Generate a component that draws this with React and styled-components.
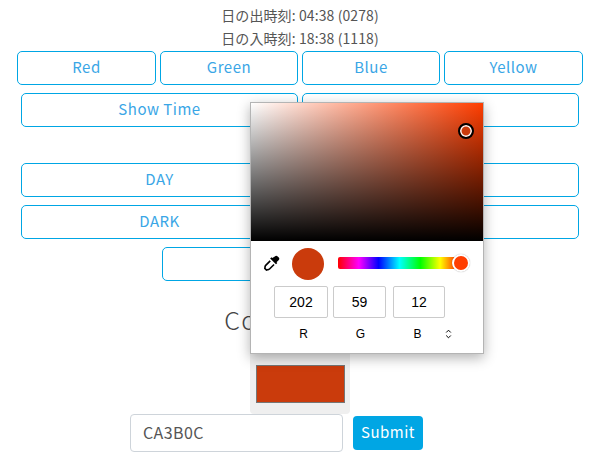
import React from 'react';
import styled, { createGlobalStyle } from 'styled-components';

const BLUE = '#00a6e4';
const PICKED = '#ca3b0c';
const HUE = '#ff3d00';

const GlobalStyle = createGlobalStyle`
  html, body {
    margin: 0;
    background: #fff;
    overflow: hidden;
  }
  body {
    font-family: "Noto Sans CJK JP", "Noto Sans", sans-serif;
  }
`;

const Page = styled.div`
  position: relative;
  width: 600px;
  height: 459px;
  padding-top: 5px;
  box-sizing: border-box;
  display: flex;
  flex-direction: column;
  align-items: center;
`;

const InfoLine = styled.div`
  height: 23px;
  line-height: 20px;
  font-size: 14px;
  letter-spacing: 0.1px;
  color: #555;
  white-space: nowrap;
`;

const ButtonRow = styled.div`
  display: flex;
  justify-content: center;
  gap: 4px;
  margin-top: ${props => props.$top ?? 8}px;
  padding-left: ${props => props.$nudge || 0}px;
`;

const OutlineButton = styled.button`
  width: ${props => props.$width}px;
  height: 34px;
  padding: 0 0 4px;
  box-sizing: border-box;
  background: #fff;
  border: 1px solid ${BLUE};
  border-radius: 5px;
  color: #3aa6e6;
  font-family: inherit;
  font-size: 15px;
  letter-spacing: 0.5px;
`;

const Title = styled.h2`
  margin: 22px 0 0;
  height: 32px;
  line-height: 32px;
  font-size: 25px;
  font-weight: 300;
  letter-spacing: 1.3px;
  color: #444;
  white-space: nowrap;
`;

const SwatchWell = styled.div`
  margin-top: 19px;
  width: 100px;
  height: 60px;
  padding: 11px 6px;
  box-sizing: border-box;
  background: #efefef;
  border-radius: 0 0 4px 4px;
`;

const Swatch = styled.div`
  width: 89px;
  height: 38px;
  box-sizing: border-box;
  border: 1px solid #767676;
  background: ${PICKED};
`;

const CodeForm = styled.div`
  display: flex;
  align-items: center;
  gap: 10px;
  margin-right: 47px;
`;

const CodeInput = styled.input`
  width: 213px;
  height: 38px;
  box-sizing: border-box;
  padding: 0 0 2px 12px;
  border: 1px solid #ced4da;
  border-radius: 4px;
  background: #fff;
  color: #555;
  font-family: inherit;
  font-size: 16px;
  letter-spacing: 0.4px;
`;

const SubmitButton = styled.button`
  width: 70px;
  height: 34px;
  padding: 0 0 3px;
  border: none;
  border-radius: 4px;
  background: ${BLUE};
  color: #fff;
  font-family: inherit;
  font-size: 15px;
  font-weight: 400;
  letter-spacing: 0.5px;
`;

/* native colour popup, lies over the page */
const Popup = styled.div`
  position: absolute;
  left: 250px;
  top: 102px;
  width: 234px;
  height: 252px;
  box-sizing: border-box;
  background: #fff;
  border: 1px solid #b4b4b4;
  box-shadow: 0 4px 12px rgba(0, 0, 0, 0.3);
  font-family: "Liberation Sans", Arial, sans-serif;
  color: #000;
`;

const SatVal = styled.div`
  position: relative;
  height: 138px;
  background:
    linear-gradient(to bottom, rgba(0, 0, 0, 0), #000),
    linear-gradient(to right, #fff, ${HUE});
`;

const Marker = styled.div`
  position: absolute;
  left: 207px;
  top: 20px;
  width: 16px;
  height: 16px;
  box-sizing: border-box;
  border-radius: 50%;
  border: 2.5px solid #000;
  background: ${PICKED};
  box-shadow: inset 0 0 0 1.5px #fff;
`;

const Controls = styled.div`
  display: flex;
  align-items: center;
  height: 44px;
  padding-left: 13px;
`;

const Picker = styled.svg`
  width: 16px;
  height: 16px;
  flex: none;
`;

const Preview = styled.div`
  width: 32px;
  height: 32px;
  margin: 1px 0 0 12px;
  border-radius: 50%;
  background: ${PICKED};
`;

const HueTrack = styled.div`
  position: relative;
  width: 123px;
  height: 12px;
  margin-left: 14px;
  border-radius: 2px;
  background: linear-gradient(to right, #f00, #f0f 17%, #00f 33%, #0ff 50%, #0f0 67%, #ff0 83%, #f00);
`;

const HueThumb = styled.div`
  position: absolute;
  right: -9px;
  top: -3px;
  width: 18px;
  height: 18px;
  box-sizing: border-box;
  border-radius: 50%;
  border: 2px solid #fff;
  background: ${HUE};
  box-shadow: 0 0 1px rgba(0, 0, 0, 0.4);
`;

const Fields = styled.div`
  display: flex;
  gap: 5px;
  padding: 1px 0 0 23px;
`;

const Field = styled.div`
  width: ${props => props.$width || 54}px;
  height: 32px;
  box-sizing: border-box;
  border: 1px solid #cbcbcb;
  border-radius: 2px;
  display: flex;
  align-items: center;
  justify-content: center;
  font-size: 14px;
  margin-left: ${props => props.$gapLeft || 0}px;
`;

const Channels = styled.div`
  display: flex;
  align-items: center;
  height: 16px;
  margin-top: 8px;
  padding-left: 24px;
`;

const Channel = styled.div`
  width: 57px;
  text-align: center;
  font-size: 12px;
  line-height: 16px;
`;

const Stepper = styled.svg`
  width: 7px;
  height: 10px;
  margin-left: -1px;
`;

const colorButtons = ['Red', 'Green', 'Blue', 'Yellow'];

export default function App() {
  return (
    <Page>
      <GlobalStyle />
      <InfoLine>日の出時刻: 04:38 (0278)</InfoLine>
      <InfoLine>日の入時刻: 18:38 (1118)</InfoLine>

      <ButtonRow $top={0}>
        {colorButtons.map(name => (
          <OutlineButton key={name} $width={name === 'Green' || name === 'Blue' ? 138 : 139}>
            {name}
          </OutlineButton>
        ))}
      </ButtonRow>
      <ButtonRow>
        <OutlineButton $width={277}>Show Time</OutlineButton>
        <OutlineButton $width={277} />
      </ButtonRow>
      <ButtonRow $top={36}>
        <OutlineButton $width={277}>DAY</OutlineButton>
        <OutlineButton $width={277} />
      </ButtonRow>
      <ButtonRow>
        <OutlineButton $width={277}>DARK</OutlineButton>
        <OutlineButton $width={277} />
      </ButtonRow>
      <ButtonRow $nudge={2}>
        <OutlineButton $width={278} />
      </ButtonRow>

      <Title>Color Picker</Title>
      <SwatchWell>
        <Swatch />
      </SwatchWell>
      <CodeForm>
        <CodeInput readOnly value="CA3B0C" />
        <SubmitButton>Submit</SubmitButton>
      </CodeForm>

      <Popup>
        <SatVal>
          <Marker />
        </SatVal>
        <Controls>
          <Picker viewBox="0 0 18 18">
            <path d="M12.2 1.6a2.2 2.2 0 0 1 3.2 0l1 1a2.2 2.2 0 0 1 0 3.2l-2.3 2.3.9.9-1.5 1.5-6.6-6.6 1.5-1.5.9.9z" fill="#000" />
            <path d="M7 6.6 1.9 11.7c-.4.4-.6.9-.6 1.4L.9 15l1.9 1.9 2-.5c.5 0 1-.2 1.4-.6l5.1-5.1" fill="#fff" stroke="#000" strokeWidth="1.8" />
          </Picker>
          <Preview />
          <HueTrack>
            <HueThumb />
          </HueTrack>
        </Controls>
        <Fields>
          <Field>202</Field>
          <Field $width={53}>59</Field>
          <Field $width={52} $gapLeft={2}>12</Field>
        </Fields>
        <Channels>
          <Channel>R</Channel>
          <Channel>G</Channel>
          <Channel>B</Channel>
          <Stepper viewBox="0 0 7 10">
            <path d="M1.2 3.5 3.5 1.2 5.8 3.5M1.2 6.5 3.5 8.8 5.8 6.5" fill="none" stroke="#000" strokeWidth="1" />
          </Stepper>
        </Channels>
      </Popup>
    </Page>
  );
}
